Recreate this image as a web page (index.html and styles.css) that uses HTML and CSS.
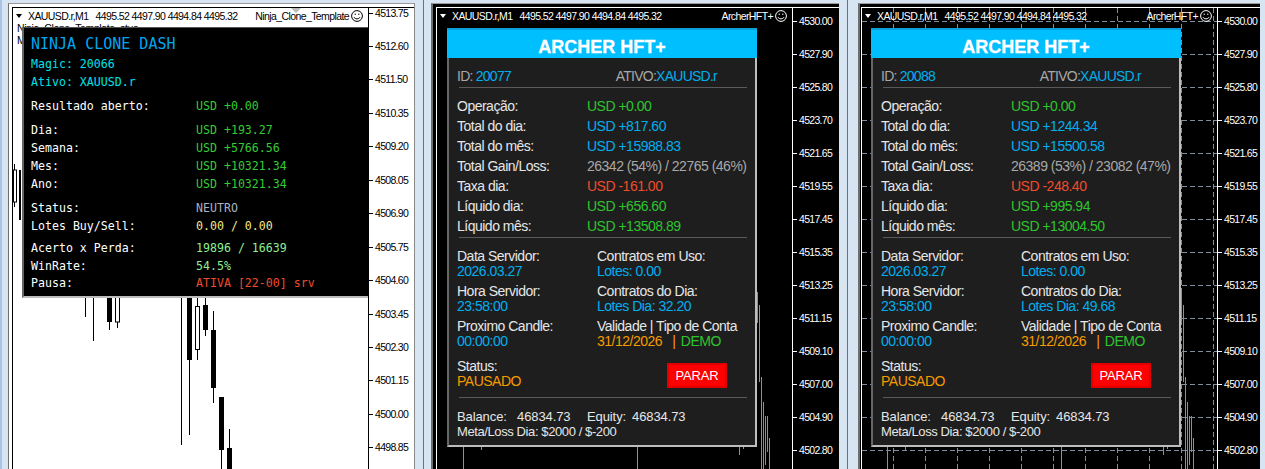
FILE: index.html
```html
<!DOCTYPE html>
<html>
	<head>
		<meta charset="utf-8">
		<title>Painel MT4</title>
		<link rel="stylesheet" href="styles.css">
	</head>
	<body>
		<div class="desktop">

			<!-- janela 1: Ninja Clone, grafico branco -->
			<div class="pane pane-one">
				<div class="frame">
					<div class="chart">
						<div class="plot">
							<svg class="candles" width="355" height="461" viewBox="13 8 355 461">
								<path class="wick" d="M14.5 164V207M85.5 297V317M93.5 297V341M109.5 297V330M117.5 297V328M181.5 297V445M189.5 297V435M197.5 297V360M205.5 297V336M213.5 311V403M221.5 397V469M229.5 429V469"/>
								<rect x="13.5" y="170" width="3" height="32" fill="#fff" stroke="#000"/>
								<rect x="19" y="170" width="2" height="50" fill="#000"/>
								<rect x="107" y="297" width="5" height="25" fill="#000"/>
								<rect x="115.5" y="297" width="4" height="25" fill="#fff" stroke="#000"/>
								<rect x="187" y="297" width="5" height="63" fill="#000"/>
								<rect x="195.5" y="306.5" width="4" height="43" fill="#fff" stroke="#000"/>
								<rect x="203" y="305" width="5" height="25" fill="#000"/>
								<rect x="211" y="330" width="5" height="58" fill="#000"/>
								<rect x="219" y="397" width="5" height="53" fill="#000"/>
								<rect x="227" y="448" width="5" height="21" fill="#000"/>
							</svg>
							<div class="titlebar">
								<span class="arrow"></span>
								<span class="symbol">XAUUSD.r,M1</span>
								<span class="ohlc">4495.52 4497.90 4494.84 4495.32</span>
								<span class="ea-name">Ninja_Clone_Template</span>
								<svg class="smiley" width="12" height="12" viewBox="0 0 12 12">
									<circle cx="6" cy="6" r="5.4"/>
									<path d="M3 7.2C4 9.4 8 9.4 9 7.2"/>
									<path d="M4.2 3.6V5M7.8 3.6V5"/>
								</svg>
							</div>
							<div class="caret"></div>
							<div class="behind">Ninja_Clone_Template_stus<br>M</div>

							<div class="ninja">
								<div class="ninja-title">NINJA CLONE DASH</div>
								<div class="ninja-info">Magic: 20066</div>
								<div class="ninja-info">Ativo: XAUUSD.r</div>

								<div class="n-row n-gap"><span>Resultado aberto:</span><span class="n-green">USD +0.00</span></div>

								<div class="n-row n-gap"><span>Dia:</span><span class="n-green">USD +193.27</span></div>
								<div class="n-row"><span>Semana:</span><span class="n-green">USD +5766.56</span></div>
								<div class="n-row"><span>Mes:</span><span class="n-green">USD +10321.34</span></div>
								<div class="n-row"><span>Ano:</span><span class="n-green">USD +10321.34</span></div>

								<div class="n-row n-gap"><span>Status:</span><span class="n-gray">NEUTRO</span></div>
								<div class="n-row"><span>Lotes Buy/Sell:</span><span class="n-khaki">0.00 / 0.00</span></div>

								<div class="n-row n-gap-small"><span>Acerto x Perda:</span><span class="n-light">19896 / 16639</span></div>
								<div class="n-row"><span>WinRate:</span><span class="n-light">54.5%</span></div>
								<div class="n-row n-tight"><span>Pausa:</span><span class="n-red">ATIVA [22-00] srv</span></div>
							</div>
						</div>
						<div class="axis axis-one">
							<div class="tick">4513.75</div><div class="tick">4512.60</div><div class="tick">4511.50</div><div class="tick">4510.35</div>
							<div class="tick">4509.20</div><div class="tick">4508.05</div><div class="tick">4506.90</div><div class="tick">4505.75</div>
							<div class="tick">4504.60</div><div class="tick">4503.45</div><div class="tick">4502.30</div><div class="tick">4501.15</div>
							<div class="tick">4500.00</div><div class="tick">4498.85</div>
						</div>
					</div>
				</div>
			</div>

			<!-- janela 2: Archer 20077 -->
			<div class="pane pane-two">
				<div class="frame">
					<div class="chart">
						<div class="plot">
							<svg class="candles" width="355" height="461" viewBox="437 8 355 461">
								<path class="bar" d="M463.5 447V469M481.5 447V450M637.5 447V469M739.5 447V455M743.5 447V449M757.5 292V323M759.5 305V382M761.5 377V469M763.5 402V469M765.5 416V465M767.5 416V452M769.5 438V469"/>
							</svg>
							<div class="titlebar">
								<span class="arrow"></span>
								<span class="symbol">XAUUSD.r,M1</span>
								<span class="ohlc">4495.52 4497.90 4494.84 4495.32</span>
								<span class="ea-name">ArcherHFT+</span>
								<svg class="smiley" width="12" height="12" viewBox="0 0 12 12">
									<circle cx="6" cy="6" r="5.4"/>
									<path d="M3 7.2C4 9.4 8 9.4 9 7.2"/>
									<path d="M4.2 3.6V5M7.8 3.6V5"/>
								</svg>
							</div>

							<div class="archer">
								<div class="archer-head">ARCHER HFT+</div>
								<div class="archer-body">
									<div class="id-row"><span class="a-dim">ID: <span class="a-blue">20077</span></span><span class="a-dim id-ativo">ATIVO:<span class="a-blue">XAUUSD.r</span></span></div>
									<div class="rule"></div>
									<div class="a-rows">
										<div class="a-row"><span>Operação:</span><span class="a-green">USD +0.00</span></div>
										<div class="a-row"><span>Total do dia:</span><span class="a-blue">USD +817.60</span></div>
										<div class="a-row"><span>Total do mês:</span><span class="a-blue">USD +15988.83</span></div>
										<div class="a-row"><span>Total Gain/Loss:</span><span class="a-dim">26342 (54%) / 22765 (46%)</span></div>
										<div class="a-row"><span>Taxa dia:</span><span class="a-red">USD -161.00</span></div>
										<div class="a-row"><span>Líquido dia:</span><span class="a-green">USD +656.60</span></div>
										<div class="a-row"><span>Líquido mês:</span><span class="a-green">USD +13508.89</span></div>
									</div>
									<div class="rule"></div>
									<div class="a-info">
										<div><div>Data Servidor:</div><div class="a-blue">2026.03.27</div></div>
										<div><div>Contratos em Uso:</div><div class="a-blue">Lotes: 0.00</div></div>
										<div><div>Hora Servidor:</div><div class="a-blue">23:58:00</div></div>
										<div><div>Contratos do Dia:</div><div class="a-blue">Lotes Dia: 32.20</div></div>
										<div><div>Proximo Candle:</div><div class="a-blue">00:00:00</div></div>
										<div><div>Validade | Tipo de Conta</div><div><span class="a-orange">31/12/2026 &nbsp; | </span><span class="a-green a-demo">DEMO</span></div></div>
									</div>
									<div class="a-status">
										<div><div>Status:</div><div class="a-orange">PAUSADO</div></div>
										<button class="btn-parar" type="button">PARAR</button>
									</div>
									<div class="rule"></div>
									<div class="a-foot">
										<div class="a-balance"><span>Balance:</span><span>46834.73</span><span>Equity:</span><span>46834.73</span></div>
										<div class="a-meta">Meta/Loss Dia: $2000 / $-200</div>
									</div>
								</div>
							</div>
						</div>
						<div class="axis">
							<div class="tick">4530.00</div><div class="tick">4527.90</div><div class="tick">4525.80</div><div class="tick">4523.70</div>
							<div class="tick">4521.65</div><div class="tick">4519.55</div><div class="tick">4517.45</div><div class="tick">4515.35</div>
							<div class="tick">4513.25</div><div class="tick">4511.15</div><div class="tick">4509.10</div><div class="tick">4507.00</div>
							<div class="tick">4504.90</div><div class="tick">4502.80</div>
						</div>
					</div>
				</div>
			</div>

			<!-- janela 3: Archer 20088, com grade -->
			<div class="pane pane-three">
				<div class="frame">
					<div class="chart">
						<div class="plot">
							<svg class="candles" width="355" height="461" viewBox="862 8 355 461">
								<path class="grid" d="M862 21.5H1217M862 54.5H1217M862 87.5H1217M862 120.5H1217M862 153.5H1217M862 186.5H1217M862 219.5H1217M862 252.5H1217M862 285.5H1217M862 318.5H1217M862 351.5H1217M862 384.5H1217M862 417.5H1217M862 450.5H1217"/>
								<path class="grid" d="M893.5 8V469M925.5 8V469M957.5 8V469M989.5 8V469M1021.5 8V469M1053.5 8V469M1085.5 8V469M1117.5 8V469M1149.5 8V469M1181.5 8V469M1213.5 8V469"/>
								<path class="bar" d="M887.5 447V469M905.5 447V450M1061.5 447V469M1163.5 447V455M1167.5 447V449M1181.5 290V322M1183.5 305V382M1185.5 377V469M1187.5 402V469M1189.5 416V465M1191.5 416V452M1193.5 438V469"/>
							</svg>
							<div class="titlebar">
								<span class="arrow"></span>
								<span class="symbol">XAUUSD.r,M1</span>
								<span class="ohlc">4495.52 4497.90 4494.84 4495.32</span>
								<span class="ea-name">ArcherHFT+</span>
								<svg class="smiley" width="12" height="12" viewBox="0 0 12 12">
									<circle cx="6" cy="6" r="5.4"/>
									<path d="M3 7.2C4 9.4 8 9.4 9 7.2"/>
									<path d="M4.2 3.6V5M7.8 3.6V5"/>
								</svg>
							</div>

							<div class="archer">
								<div class="archer-head">ARCHER HFT+</div>
								<div class="archer-body">
									<div class="id-row"><span class="a-dim">ID: <span class="a-blue">20088</span></span><span class="a-dim id-ativo">ATIVO:<span class="a-blue">XAUUSD.r</span></span></div>
									<div class="rule"></div>
									<div class="a-rows">
										<div class="a-row"><span>Operação:</span><span class="a-green">USD +0.00</span></div>
										<div class="a-row"><span>Total do dia:</span><span class="a-blue">USD +1244.34</span></div>
										<div class="a-row"><span>Total do mês:</span><span class="a-blue">USD +15500.58</span></div>
										<div class="a-row"><span>Total Gain/Loss:</span><span class="a-dim">26389 (53%) / 23082 (47%)</span></div>
										<div class="a-row"><span>Taxa dia:</span><span class="a-red">USD -248.40</span></div>
										<div class="a-row"><span>Líquido dia:</span><span class="a-green">USD +995.94</span></div>
										<div class="a-row"><span>Líquido mês:</span><span class="a-green">USD +13004.50</span></div>
									</div>
									<div class="rule"></div>
									<div class="a-info">
										<div><div>Data Servidor:</div><div class="a-blue">2026.03.27</div></div>
										<div><div>Contratos em Uso:</div><div class="a-blue">Lotes: 0.00</div></div>
										<div><div>Hora Servidor:</div><div class="a-blue">23:58:00</div></div>
										<div><div>Contratos do Dia:</div><div class="a-blue">Lotes Dia: 49.68</div></div>
										<div><div>Proximo Candle:</div><div class="a-blue">00:00:00</div></div>
										<div><div>Validade | Tipo de Conta</div><div><span class="a-orange">31/12/2026 &nbsp; | </span><span class="a-green a-demo">DEMO</span></div></div>
									</div>
									<div class="a-status">
										<div><div>Status:</div><div class="a-orange">PAUSADO</div></div>
										<button class="btn-parar" type="button">PARAR</button>
									</div>
									<div class="rule"></div>
									<div class="a-foot">
										<div class="a-balance"><span>Balance:</span><span>46834.73</span><span>Equity:</span><span>46834.73</span></div>
										<div class="a-meta">Meta/Loss Dia: $2000 / $-200</div>
									</div>
								</div>
							</div>
						</div>
						<div class="axis">
							<div class="tick">4530.00</div><div class="tick">4527.90</div><div class="tick">4525.80</div><div class="tick">4523.70</div>
							<div class="tick">4521.65</div><div class="tick">4519.55</div><div class="tick">4517.45</div><div class="tick">4515.35</div>
							<div class="tick">4513.25</div><div class="tick">4511.15</div><div class="tick">4509.10</div><div class="tick">4507.00</div>
							<div class="tick">4504.90</div><div class="tick">4502.80</div>
						</div>
					</div>
				</div>
			</div>

		</div>
	</body>
</html>
```

FILE: styles.css
```css
html, body
{
	margin: 0px;
	height: 100%;
	overflow: hidden;
}

body
{
	font-family: "Liberation Sans", Arial, sans-serif;
	font-size: 13px;
	background-color: #D7E4F2;
}

.desktop
{
	display: flex;
	height: 469px;
	overflow: hidden;
}

/* janelas */
.pane
{
	flex: none;
	box-sizing: border-box;
	width: 424px;
	height: 469px;
	padding-top: 3px;
	padding-right: 8px;
	padding-left: 7px;
	border-right: 1px solid #3C7FA8;
}

.pane-one
{
	padding-left: 6px;
	border-left: 2px solid #A9C4E4;
}

.pane-three
{
	flex: 1;
	padding-right: 5px;
	padding-left: 10px;
	border-right: 0px;
}

.frame
{
	box-sizing: border-box;
	height: 480px;
	padding-top: 3px;
	padding-left: 3px;
	border-top: 1px solid #9A9A9A;
	border-left: 2px solid #6E6E6E;
	background-color: #000000;
}

.pane-one .frame
{
	border-left-width: 1px;
	border-right: 1px solid #8A8A8A;
	background-color: #FFFFFF;
}

.pane-three .frame
{
	padding-left: 1px;
}

.chart
{
	display: flex;
	height: 470px;
	border-top: 1px solid #FFFFFF;
	border-left: 1px solid #FFFFFF;
	color: #FFFFFF;
	background-color: #000000;
}

.pane-one .chart
{
	border-color: #000000;
	color: #000000;
	background-color: #FFFFFF;
}

.plot
{
	position: relative;
	flex: none;
	width: 355px;
}

.candles
{
	position: absolute;
	top: 0px;
	left: 0px;
}

.wick
{
	fill: none;
	stroke: #000000;
}

.bar
{
	fill: none;
	stroke: #22DD22;
}

.grid
{
	fill: none;
	stroke: #8090A0;
	stroke-dasharray: 5 3;
}

/* titulo do grafico */
.titlebar
{
	position: absolute;
	top: 0px;
	left: 0px;
	right: 0px;
	display: flex;
	align-items: center;
	height: 16px;
	padding-left: 3px;
	padding-right: 5px;
	font-size: 10.5px;
	letter-spacing: -0.6px;
	white-space: nowrap;
}

.arrow
{
	width: 0px;
	height: 0px;
	margin-right: 6px;
	border-top: 4px solid currentColor;
	border-left: 3px solid transparent;
	border-right: 3px solid transparent;
}

.ohlc
{
	margin-left: 7px;
}

.ea-name
{
	margin-left: auto;
	margin-right: 2px;
}

.smiley
{
	flex: none;
	fill: none;
	stroke: currentColor;
}

.caret
{
	position: absolute;
	top: 0px;
	left: 278px;
	width: 0px;
	height: 0px;
	border-top: 5px solid #BBBBBB;
	border-left: 5px solid transparent;
	border-right: 5px solid transparent;
}

.behind
{
	position: absolute;
	top: 14px;
	left: 4px;
	font-size: 10.5px;
	line-height: 12px;
	letter-spacing: -0.4px;
}

/* eixo de precos */
.axis
{
	flex: 1;
	padding-top: 8px;
	border-left: 1px solid #FFFFFF;
	font-size: 10.5px;
	letter-spacing: -0.7px;
}

.axis-one
{
	margin-top: -0.5px;
	padding-top: 0px;
	border-left-color: #000000;
}

.tick
{
	display: flex;
	height: 33px;
	line-height: 10px;
}

.axis-one .tick
{
	height: 33.46px;
}

.tick::before
{
	content: "";
	flex: none;
	width: 4px;
	height: 1px;
	margin: 5px 2px 0px 0px;
	background-color: currentColor;
}

/* painel ninja */
.ninja
{
	position: absolute;
	top: 19px;
	left: 9px;
	right: 0px;
	box-sizing: border-box;
	height: 271px;
	padding: 6px 0px 0px 7px;
	border-left: 2px solid #666666;
	border-bottom: 2px solid #BDBDBD;
	border-top: 1px solid #555555;
	font-family: "DejaVu Sans Mono", "Liberation Mono", monospace;
	font-size: 11.6px;
	line-height: 18px;
	color: #FFFFFF;
	background-color: #000000;
}

.ninja-title
{
	height: 21px;
	font-size: 15px;
	line-height: 20px;
	color: #00A6F0;
}

.ninja-info
{
	color: #00E0E8;
}

.n-row
{
	display: grid;
	grid-template-columns: 165px 1fr;
}

.n-gap
{
	margin-top: 6px;
}

.n-gap-small
{
	margin-top: 4px;
}

.n-tight
{
	margin-top: -1px;
}

.n-green
{
	color: #33CC33;
}

.n-gray
{
	color: #A9B2C0;
}

.n-khaki
{
	color: #F0E68C;
}

.n-light
{
	color: #90EE90;
}

.n-red
{
	color: #EE4C2C;
}

/* painel archer */
.archer
{
	position: absolute;
	top: 20px;
	left: 10px;
	box-sizing: border-box;
	width: 310px;
	height: 419px;
	border-left: 2px solid #666666;
	border-right: 2px solid #BDBDBD;
	border-bottom: 2px solid #BDBDBD;
	font-size: 14px;
	letter-spacing: -0.5px;
	color: #E6E6E6;
	background-color: #1E1E1E;
}

.pane-three .archer
{
	left: 9px;
}

.archer-head
{
	box-sizing: border-box;
	height: 30px;
	margin: 0px -2px;
	border-top: 2px solid #0BA0DC;
	font-size: 18px;
	font-weight: bold;
	letter-spacing: 0px;
	line-height: 34px;
	text-align: center;
	color: #FFFFFF;
	background-color: #00BFFF;
	-webkit-text-stroke: 0.3px #FFFFFF;
}

.archer-body
{
	padding: 8px 8px 0px 8px;
}

.id-row
{
	display: flex;
	height: 20px;
	letter-spacing: -0.75px;
	line-height: 20px;
}

.id-ativo
{
	margin-left: auto;
	margin-right: 30px;
}

.rule
{
	height: 1px;
	margin: 1px 0px 0px 2px;
	background-color: #5A5A5A;
}

.a-rows
{
	padding-top: 8px;
}

.a-row
{
	display: grid;
	grid-template-columns: 130px 1fr;
	height: 20px;
	line-height: 21px;
	white-space: nowrap;
}

.a-info
{
	display: grid;
	grid-template-columns: 140px 1fr;
	row-gap: 5px;
	padding-top: 11px;
	line-height: 15px;
	white-space: nowrap;
}

.a-demo
{
	margin-left: 2px;
}

.a-status
{
	display: flex;
	justify-content: space-between;
	align-items: flex-end;
	height: 30px;
	margin-top: 10px;
	padding-right: 20px;
	line-height: 15px;
}

.btn-parar
{
	box-sizing: border-box;
	width: 60px;
	height: 25px;
	margin-bottom: 1px;
	padding: 0px;
	border: 2px solid #E00000;
	font-family: "Liberation Sans", Arial, sans-serif;
	font-size: 13px;
	letter-spacing: -0.2px;
	color: #FFFFFF;
	background-color: #FF0000;
}

.a-status + .rule
{
	margin-top: 8px;
}

.a-foot
{
	padding-top: 11px;
	font-size: 13px;
	letter-spacing: 0px;
	line-height: 15px;
}

.a-balance
{
	display: grid;
	grid-template-columns: 60px 70px 45px 1fr;
	letter-spacing: -0.1px;
}

.a-meta
{
	letter-spacing: -0.4px;
}

.a-dim
{
	color: #A8A8A8;
}

.a-blue
{
	color: #00AEEF;
}

.a-green
{
	color: #2EC42E;
}

.a-red
{
	color: #EE4C2C;
}

.a-orange
{
	color: #F59B00;
}
```
